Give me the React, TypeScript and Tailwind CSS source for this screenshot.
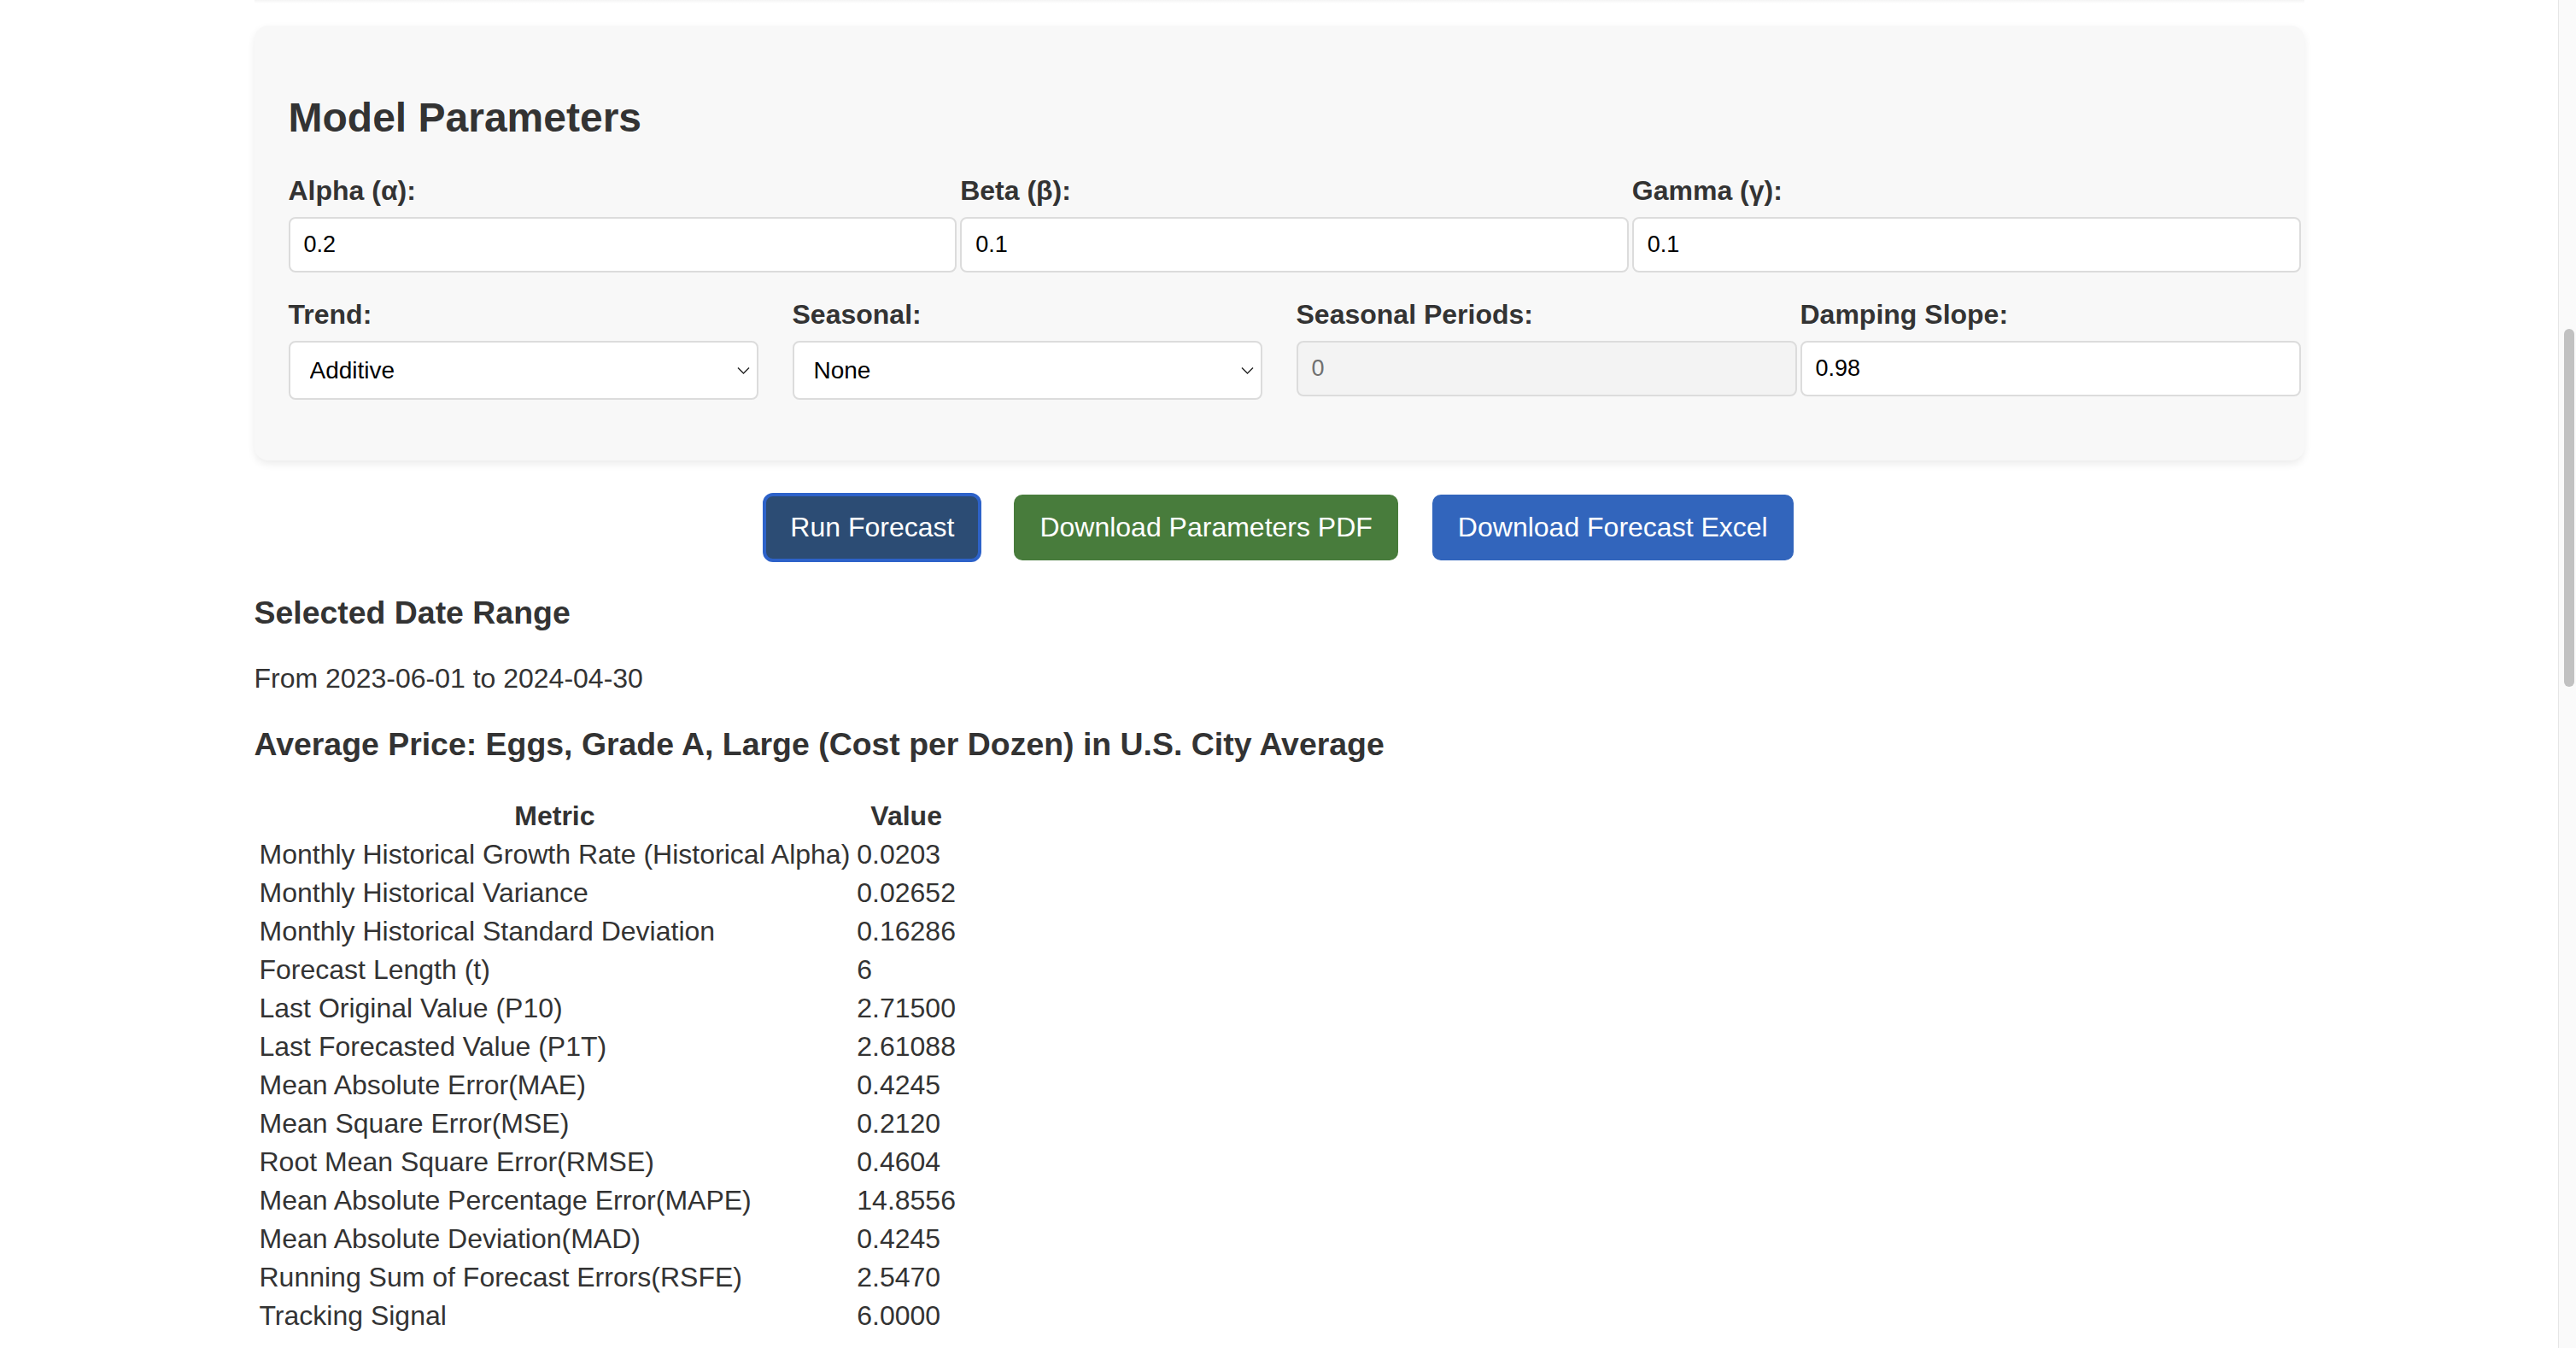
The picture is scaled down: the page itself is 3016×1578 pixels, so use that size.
const metrics: [string, string][] = [
  ["Monthly Historical Growth Rate (Historical Alpha)", "0.0203"],
  ["Monthly Historical Variance", "0.02652"],
  ["Monthly Historical Standard Deviation", "0.16286"],
  ["Forecast Length (t)", "6"],
  ["Last Original Value (P10)", "2.71500"],
  ["Last Forecasted Value (P1T)", "2.61088"],
  ["Mean Absolute Error(MAE)", "0.4245"],
  ["Mean Square Error(MSE)", "0.2120"],
  ["Root Mean Square Error(RMSE)", "0.4604"],
  ["Mean Absolute Percentage Error(MAPE)", "14.8556"],
  ["Mean Absolute Deviation(MAD)", "0.4245"],
  ["Running Sum of Forecast Errors(RSFE)", "2.5470"],
  ["Tracking Signal", "6.0000"],
];

const Label = ({ children }: { children: React.ReactNode }) => (
  <label className="mb-[12px] block text-[32px] font-bold leading-[37px] text-[#333]">{children}</label>
);

const TextInput = ({ value, disabled }: { value: string; disabled?: boolean }) => (
  <input
    type="text"
    defaultValue={value}
    disabled={disabled}
    className={
      "box-content block h-[29px] w-full rounded-[8px] border-2 border-[#dcdcdc] px-[16px] py-[16px] text-[27px] leading-[31px] outline-none " +
      (disabled ? "bg-[#f3f3f3] text-[#707070]" : "bg-white text-black")
    }
  />
);

const Select = ({ value, options }: { value: string; options: string[] }) => (
  <div className="relative">
    <select
      defaultValue={value}
      className="block h-[69px] w-full appearance-none rounded-[8px] border-2 border-[#dcdcdc] bg-white pl-[23px] text-[28px] text-black outline-none"
    >
      {options.map((o) => (
        <option key={o}>{o}</option>
      ))}
    </select>
    <svg
      className="pointer-events-none absolute right-[10px] top-1/2 -translate-y-1/2"
      width="15"
      height="9"
      viewBox="0 0 15 9"
      fill="none"
    >
      <polyline points="1,1 7.5,7.5 14,1" stroke="#222" strokeWidth="1.4" />
    </svg>
  </div>
);

export default function App() {
  return (
    <div className="flex h-screen overflow-hidden bg-white font-['Liberation_Sans',Arial,sans-serif] text-[#333]">
      <main className="min-w-0 flex-1">
        <div className="mx-auto w-[2400px]">
          <div className="h-[4px] bg-linear-to-b from-[#f4f4f4] to-white" />

          {/* Parameters card */}
          <section className="mt-[26px] rounded-[16px] bg-[#f8f8f8] p-[40px] shadow-[0_4px_10px_rgba(0,0,0,0.08)]">
            <h2 className="my-[40px] text-[48px] font-bold leading-[55px] text-[#333]">Model Parameters</h2>

            <div className="mb-[31px] grid grid-cols-3 gap-x-[40px]">
              <div>
                <Label>Alpha (α):</Label>
                <TextInput value="0.2" />
              </div>
              <div>
                <Label>Beta (β):</Label>
                <TextInput value="0.1" />
              </div>
              <div>
                <Label>Gamma (γ):</Label>
                <TextInput value="0.1" />
              </div>
            </div>

            <div className="mb-[31px] grid grid-cols-4 gap-x-[40px]">
              <div>
                <Label>Trend:</Label>
                <Select value="Additive" options={["None", "Additive", "Multiplicative"]} />
              </div>
              <div>
                <Label>Seasonal:</Label>
                <Select value="None" options={["None", "Additive", "Multiplicative"]} />
              </div>
              <div>
                <Label>Seasonal Periods:</Label>
                <TextInput value="0" disabled />
              </div>
              <div>
                <Label>Damping Slope:</Label>
                <TextInput value="0.98" />
              </div>
            </div>
          </section>

          {/* Actions */}
          <div className="mt-[40px] flex justify-center gap-[40px]">
            <button className="rounded-[10px] bg-[#2c4c74] px-[30px] py-[20px] text-[32px] leading-[37px] text-white outline-4 -outline-offset-2 outline-[#2d62c9]">
              Run Forecast
            </button>
            <button className="rounded-[10px] bg-[#487c3c] px-[30px] py-[20px] text-[32px] leading-[37px] text-white">
              Download Parameters PDF
            </button>
            <button className="rounded-[10px] bg-[#3265bc] px-[30px] py-[20px] text-[32px] leading-[37px] text-white">
              Download Forecast Excel
            </button>
          </div>

          {/* Results */}
          <div>
            <h3 className="mb-[37.44px] mt-[39.5px] text-[37.44px] font-bold leading-[1.15] text-[#333]">Selected Date Range</h3>
            <p className="my-[32px] text-[32px] leading-[1.15]">From 2023-06-01 to 2024-04-30</p>
            <h3 className="my-[37.44px] text-[37.44px] font-bold leading-[1.15] text-[#333]">
              Average Price: Eggs, Grade A, Large (Cost per Dozen) in U.S. City Average
            </h3>
            <table className="border-separate border-spacing-[4px] text-[32px] leading-[37px] text-[#333]">
              <thead>
                <tr>
                  <th className="p-[2px] text-center font-bold">Metric</th>
                  <th className="p-[2px] text-center font-bold">Value</th>
                </tr>
              </thead>
              <tbody>
                {metrics.map(([name, val]) => (
                  <tr key={name}>
                    <td className="p-[2px]">{name}</td>
                    <td className="p-[2px]">{val}</td>
                  </tr>
                ))}
              </tbody>
            </table>
          </div>
        </div>
      </main>

      {/* Scrollbar */}
      <div className="w-[21px] shrink-0 border-l border-[#e6e6e6] bg-[#fafafa] pl-[6px] pr-[2px] pt-[385px]">
        <div className="h-[419px] rounded-full bg-[#c1c1c1]" />
      </div>
    </div>
  );
}
